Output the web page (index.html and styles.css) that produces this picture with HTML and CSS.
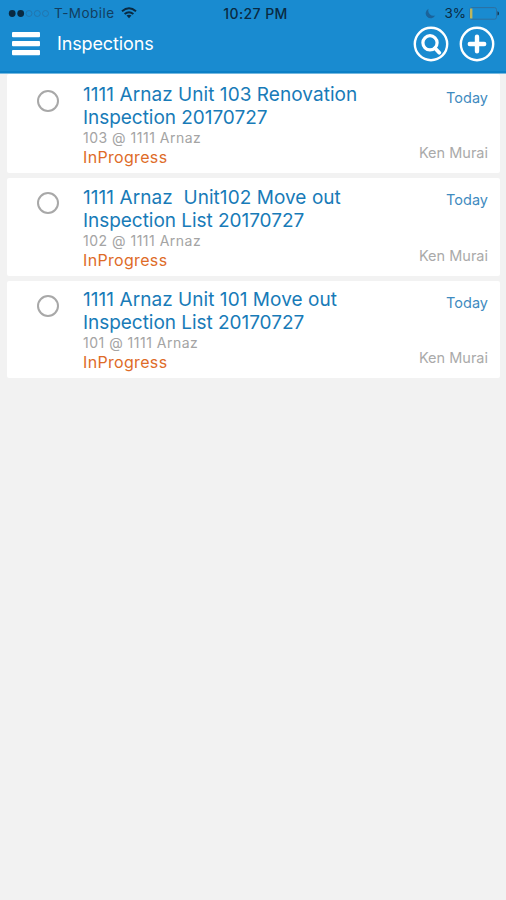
FILE: index.html
```html
<!DOCTYPE html>
<html lang="en">
<head>
<meta charset="utf-8">
<title>Inspections</title>
<link rel="stylesheet" href="styles.css">
</head>
<body>
<header class="header">
  <div class="status">
    <div class="carrier">
      <svg class="signal" width="43" height="9" viewBox="0 0 43 9"><g fill="#092a42"><circle cx="4.2" cy="4.5" r="3.4"/><circle cx="12.7" cy="4.5" r="3.4"/></g><g fill="none" stroke="#2470a5" stroke-width=".8"><circle cx="21" cy="4.5" r="3"/><circle cx="29.3" cy="4.5" r="3"/><circle cx="37.5" cy="4.5" r="3"/></g></svg>
      <span class="carrier-name">T-Mobile</span>
      <svg class="wifi" width="16" height="12" viewBox="0 0 16 12"><g fill="none" stroke="#092a42" stroke-width="1.9"><path d="M1 4.3Q8-1.7 15 4.3"/><path d="M3.6 7Q8 3.3 12.4 7"/></g><path d="M5.5 8.6Q8 6.7 10.5 8.6L8 11.2Z" fill="#092a42"/></svg>
    </div>
    <span class="time">10:27 PM</span>
    <div class="power">
      <svg class="moon" width="11" height="11" viewBox="0 0 11 11"><path d="M3.6.8A5 5 0 1 0 10.2 7.5 5.2 5.2 0 0 1 3.6.8Z" fill="#1b639a"/></svg>
      <span class="percent">3%</span>
      <svg class="battery" width="31" height="13" viewBox="0 0 31 13"><rect x=".9" y=".6" width="26.6" height="11.6" rx="2" fill="none" stroke="#2d70a0" stroke-width="1"/><rect x="1" y="1.5" width="2.4" height="10" fill="#bdb65e"/><path d="M28.5 4.3Q30 4.7 30 6.4T28.5 8.5Z" fill="#12334b"/></svg>
    </div>
  </div>
  <div class="toolbar">
    <svg class="menu" width="28" height="24" viewBox="0 0 28 24"><g fill="#fff"><rect width="28" height="5.2" rx="1"/><rect y="9" width="28" height="5.2" rx="1"/><rect y="18" width="28" height="5.2" rx="1"/></g></svg>
    <h1 class="heading">Inspections</h1>
    <svg class="action" width="36" height="36" viewBox="0 0 36 36"><g fill="none" stroke="#fff"><circle cx="18" cy="18" r="16.2" stroke-width="2.4"/><circle cx="17" cy="16.8" r="7.1" stroke-width="3.2"/><path d="M22 22.2L26.3 26.7" stroke-width="3.8" stroke-linecap="round"/></g></svg>
    <svg class="action" width="36" height="36" viewBox="0 0 36 36"><g fill="none" stroke="#fff"><circle cx="18" cy="18" r="16.2" stroke-width="2.4"/><path d="M18 10.8V25.2M10.8 18H25.2" stroke-width="4.4" stroke-linecap="round"/></g></svg>
  </div>
</header>
<main class="list">
  <article class="card">
    <span class="check"></span>
    <div class="details">
      <h2 class="title"><span class="line lead">1111 Arnaz Unit 103 Renovation</span><span class="line rest">Inspection 20170727</span></h2>
      <p class="place">103 @ 1111 Arnaz</p>
      <p class="state">InProgress</p>
    </div>
    <div class="meta"><span class="date">Today</span><span class="person">Ken Murai</span></div>
  </article>
  <article class="card">
    <span class="check"></span>
    <div class="details">
      <h2 class="title"><span class="line lead">1111 Arnaz&nbsp; Unit102 Move out</span><span class="line rest">Inspection List 20170727</span></h2>
      <p class="place">102 @ 1111 Arnaz</p>
      <p class="state">InProgress</p>
    </div>
    <div class="meta"><span class="date">Today</span><span class="person">Ken Murai</span></div>
  </article>
  <article class="card">
    <span class="check"></span>
    <div class="details">
      <h2 class="title"><span class="line lead">1111 Arnaz Unit 101 Move out</span><span class="line rest">Inspection List 20170727</span></h2>
      <p class="place">101 @ 1111 Arnaz</p>
      <p class="state">InProgress</p>
    </div>
    <div class="meta"><span class="date">Today</span><span class="person">Ken Murai</span></div>
  </article>
</main>
</body>
</html>
```

FILE: styles.css
```css
* { box-sizing: border-box; }
body {
  margin: 0;
  min-height: 900px;
  background: #f2f2f2;
  font-family: Inter, "Liberation Sans", sans-serif;
}
h1, h2, p { margin: 0; font-weight: 400; }
svg { display: block; flex: none; }
.header {
  height: 74px;
  background: #198bd0;
  border-bottom: 1px solid #75b9e0;
  box-shadow: inset 0 -2px #0c80c6;
}
.status {
  display: grid;
  grid-template-columns: 1fr auto 1fr;
  align-items: center;
  height: 26px;
  padding: 0 6px 0 8px;
  color: #092a42;
  font-size: 13.5px;
}
.carrier, .power { display: flex; align-items: center; }
.carrier-name { margin-left: 3px; letter-spacing: .45px; color: #123e60; }
.wifi { margin-left: 6px; }
.time { margin-left: 3px; font-size: 14px; font-weight: 500; letter-spacing: .4px; }
.power { justify-content: flex-end; }
.percent { margin: 0 3px 0 8px; }
.toolbar {
  display: flex;
  align-items: center;
  height: 36px;
  padding: 0 11px 0 12px;
}
.heading {
  flex: 1;
  margin-left: 17px;
  color: #fff;
  font-size: 18px;
  line-height: 24px;
  letter-spacing: -.13px;
}
.action + .action { margin-left: 10px; }
.list {
  display: flex;
  flex-direction: column;
  gap: 5px;
  padding: 2px 6px 0 7px;
}
.card {
  display: flex;
  height: 97.3px;
  padding: 7px 12px 0 30px;
  border-radius: 2px;
  background: #fff;
}
.card:first-child {
  height: 99.3px;
  margin-top: -2px;
  padding-top: 9px;
}
.check {
  flex: none;
  width: 22px;
  height: 22px;
  margin-top: 7px;
  border: 2px solid #a8a8a8;
  border-radius: 50%;
}
.details { flex: 1; margin-left: 24px; }
.title { padding-top: .4px; color: #187bb8; font-size: 19px; line-height: 23px; }
.line { display: block; white-space: nowrap; }
.lead { letter-spacing: .05px; }
.rest { letter-spacing: -.04px; }
.place { color: #a4a4a4; font-size: 14px; line-height: 18px; letter-spacing: .5px; }
.state { color: #de6b28; font-size: 16px; line-height: 20px; letter-spacing: .33px; }
.meta {
  display: flex;
  flex-direction: column;
  align-items: flex-end;
  padding-top: 6px;
  font-size: 14.5px;
  line-height: 18px;
}
.date { color: #3f8bc0; }
.person { margin-top: 37.4px; color: #aaa; }
```
